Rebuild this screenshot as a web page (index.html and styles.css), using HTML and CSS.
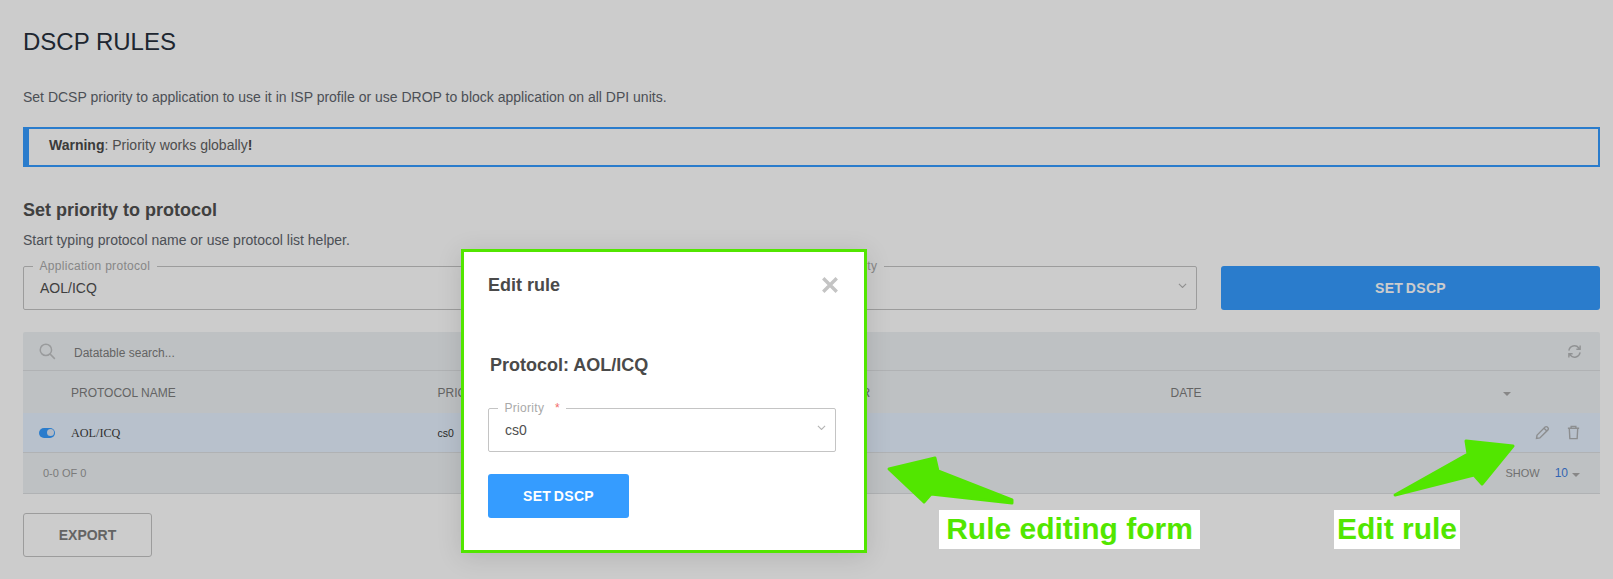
FILE: index.html
```html
<!DOCTYPE html>
<html lang="en">
<head>
<meta charset="utf-8">
<title>DSCP rules</title>
<link rel="stylesheet" href="styles.css">
</head>
<body>
<main class="page">
  <h1 class="page-title">DSCP RULES</h1>
  <p class="intro">Set DCSP priority to application to use it in ISP profile or use DROP to block application on all DPI units.</p>
  <div class="alert"><strong>Warning</strong>: Priority works globally<strong>!</strong></div>
  <h2 class="section-title">Set priority to protocol</h2>
  <p class="hint">Start typing protocol name or use protocol list helper.</p>
  <form class="rule-form">
    <fieldset class="field">
      <legend>Application protocol</legend>
      <span class="field-value">AOL/ICQ</span>
    </fieldset>
    <fieldset class="field">
      <legend>Priority</legend>
      <span class="field-value">cs0</span>
      <svg class="chevron" viewBox="0 0 10 6" aria-hidden="true"><path d="M1 1l4 4 4-4"/></svg>
    </fieldset>
    <button type="button" class="btn-primary">SET DSCP</button>
  </form>

  <section class="table">
    <div class="table-search">
      <svg class="icon-search" viewBox="0 0 18 18" aria-hidden="true"><circle cx="7.3" cy="7.3" r="6"/><path d="M11.8 11.8l5 5"/></svg>
      <span class="search-text">Datatable search...</span>
      <svg class="icon-refresh" viewBox="0 0 16 16" aria-hidden="true"><path d="M2 7a6 6 0 0 1 10.6-2.8L14 5.6M14 1.6v4h-4M14 9a6 6 0 0 1-10.6 2.8L2 10.4M2 14.4v-4h4"/></svg>
    </div>
    <div class="table-grid table-head">
      <span></span>
      <span>PROTOCOL NAME</span>
      <span>PRIORITY</span>
      <span>OPERATOR</span>
      <span>DATE</span>
      <span class="head-menu"><i class="caret"></i></span>
    </div>
    <div class="table-grid table-row">
      <span class="toggle"><i></i></span>
      <span class="cell-name">AOL/ICQ</span>
      <span class="cell-priority">cs0</span>
      <span></span>
      <span></span>
      <span class="row-actions">
        <svg class="icon-action" viewBox="0 0 16 16" aria-hidden="true"><path d="M2.2 10.8L10.8 2.2a1.6 1.6 0 0 1 2.3 0l.7.7a1.6 1.6 0 0 1 0 2.3L5.2 13.8 1.6 14.4zM9.6 3.4l3 3"/></svg>
        <svg class="icon-action" viewBox="0 0 16 16" aria-hidden="true"><path d="M2 3.5h12M5.5 3.5V1.5h5v2M3.5 3.5l.6 11h7.8l.6-11"/></svg>
      </span>
    </div>
    <div class="table-foot">
      <span class="range">0-0 OF 0</span>
      <span class="pager"><span>SHOW</span><b>10</b><i class="caret"></i></span>
    </div>
  </section>
  <button type="button" class="btn-export">EXPORT</button>
</main>

<div class="overlay"></div>

<div class="modal">
  <header class="modal-head">
    <h3>Edit rule</h3>
    <svg class="modal-close" viewBox="0 0 16 16" aria-hidden="true"><path d="M2 2l12 12M14 2L2 14"/></svg>
  </header>
  <p class="modal-protocol">Protocol: AOL/ICQ</p>
  <fieldset class="field modal-field">
    <legend>Priority <em>*</em></legend>
    <span class="field-value">cs0</span>
    <svg class="chevron" viewBox="0 0 10 6" aria-hidden="true"><path d="M1 1l4 4 4-4"/></svg>
  </fieldset>
  <button type="button" class="btn-modal">SET DSCP</button>
</div>

<svg class="arrows" viewBox="0 0 1613 579" aria-hidden="true">
  <path d="M889 469L935 458L938 471L1012 500L1012 503L931 494L924 502Z"/>
  <path d="M1395 495L1468 454L1466 441L1513 446L1482 484L1474 475Z"/>
</svg>
<div class="note note-form">Rule editing form</div>
<div class="note note-edit">Edit rule</div>
</body>
</html>
```
FILE: styles.css
```css
* { box-sizing: border-box; }
html, body { margin: 0; height: 579px; overflow: hidden; }
body { background: #fff; font-family: "Liberation Sans", Arial, sans-serif; color: #5e646c; position: relative; }

.page { padding: 28px 13px 0 23px; }
.page-title { margin: 0; font-size: 24px; line-height: 28px; font-weight: 400; color: #27303c; }
.intro { margin: 31px 0 0; font-size: 14px; line-height: 20px; }
.alert { margin-top: 20px; height: 40px; border: 2px solid #359cff; border-left-width: 6px; padding-left: 20px; font-size: 14px; line-height: 33px; color: #626262; }
.alert strong { color: #4a4a4a; }
.section-title { margin: 31px 0 0; font-size: 18px; line-height: 24px; font-weight: 700; color: #505050; }
.hint { margin: 8px 0 0; font-size: 14px; line-height: 20px; }

.rule-form { margin-top: 9px; display: grid; grid-template-columns: 1fr 376px 379px; column-gap: 24px; align-items: end; }
.field { position: relative; margin: 0; padding: 0; height: 51px; border: 1px solid #c4c4c4; border-radius: 2px; min-width: 0; }
.field legend { margin-left: 9px; padding: 0 6.5px; font-size: 12px; line-height: 14px; letter-spacing: .3px; color: #a9a9a9; }
.field-value { display: block; font-size: 14px; line-height: 20px; margin-top: 5px; padding-left: 16px; color: #4f4f4f; }
.chevron { position: absolute; right: 9px; top: 10px; width: 9px; height: 5.4px; fill: none; stroke: #b4b4b4; stroke-width: 1.2; }

.btn-primary, .btn-modal { border: 0; border-radius: 3px; background: #359cff; color: #fff; font: 700 14px "Liberation Sans", Arial, sans-serif; letter-spacing: .3px; word-spacing: -1.5px; }
.btn-primary { height: 44px; }

.table { margin-top: 22px; background: #eef2f4; border-radius: 2px; }
.table-search { height: 39px; display: flex; align-items: center; padding: 0 18px 0 16px; border-bottom: 1px solid #dcdfe2; }
.icon-search { width: 17px; height: 17px; fill: none; stroke: #c0c2c4; stroke-width: 1.6; }
.search-text { margin-left: 18px; padding-top: 3px; flex: 1; font-size: 12px; line-height: 16px; color: #7d7d7d; }
.icon-refresh { width: 15px; height: 15px; fill: none; stroke: #b5b7b9; stroke-width: 1.5; }

.table-grid { display: grid; grid-template-columns: 48px 366.5px 366.5px 366.5px 326.5px 1fr; align-items: center; }
.table-head { height: 42px; padding-top: 2px; font-size: 12px; color: #7d7d7d; }
.head-menu { padding-left: 6px; }
.caret { display: inline-block; width: 0; height: 0; border: 4px solid transparent; border-top: 4px solid #a9a9a9; border-bottom: 0; vertical-align: middle; }
.table-row { height: 40px; background: #e7f2ff; border-bottom: 1px solid #dcdfe2; }
.toggle { display: block; width: 16px; height: 10px; margin-left: 16px; border-radius: 5px; background: #359cff; position: relative; }
.toggle i { position: absolute; right: 1px; top: 1.5px; width: 7px; height: 7px; border-radius: 50%; background: #dfe8f5; }
.cell-name { padding-top: 1px; font-family: "Liberation Serif", serif; font-size: 12.2px; color: #3d3d3d; }
.cell-priority { font-size: 10.5px; color: #333; }
.row-actions { display: flex; justify-content: flex-end; gap: 16px; padding-right: 19px; }
.icon-action { width: 15px; height: 15px; fill: none; stroke: #b0b2b4; stroke-width: 1.5; }

.table-foot { height: 41px; display: flex; align-items: center; justify-content: space-between; padding: 0 20px 0 20px; border-bottom: 1px solid #dcdfe2; }
.range { font-size: 11px; color: #9a9a9a; }
.pager { display: flex; align-items: center; font-size: 11px; color: #8c8c8c; }
.pager b { margin: 0 4px 0 15px; font-size: 12px; font-weight: 400; color: #3f7ee0; }
.pager .caret { margin-top: 3px; }

.btn-export { display: block; margin-top: 19px; width: 129px; height: 44px; background: transparent; border: 1px solid #c4c4c4; border-radius: 3px; font: 700 14px "Liberation Sans", Arial, sans-serif; color: #7d7d7d; }

.overlay { position: absolute; inset: 0; background: rgba(0, 0, 0, .2); }

.modal { position: absolute; left: 461px; top: 249px; width: 406px; height: 304px; padding: 21px 28px 0 24px; background: #fff; border: 3px solid #52e600; box-shadow: 0 4px 24px rgba(0, 0, 0, .12); }
.modal-head { display: flex; align-items: center; justify-content: space-between; height: 24px; margin-right: -3px; }
.modal-head h3 { margin: 0; font-size: 18px; line-height: 24px; font-weight: 700; color: #4a4a4a; }
.modal-close { width: 18px; height: 18px; fill: none; stroke: #c4c4c4; stroke-width: 3; }
.modal-protocol { margin: 56px 0 0 2px; font-size: 18px; line-height: 24px; font-weight: 700; color: #4a4a4a; }
.modal-field { margin-top: 24px; }
.modal-field legend em { margin-left: 7px; color: #f26b6b; font-style: normal; }
.btn-modal { display: block; margin-top: 22px; width: 141px; height: 44px; }

.arrows { position: absolute; left: 0; top: 0; width: 1613px; height: 579px; pointer-events: none; }
.arrows path { fill: #52e600; stroke: #52e600; stroke-width: 3; stroke-linejoin: round; }

.note { position: absolute; top: 510px; height: 39px; background: #fff; color: #52e600; font-size: 30px; line-height: 37px; font-weight: 700; text-align: center; white-space: nowrap; }
.note-form { left: 939px; width: 261px; }
.note-edit { left: 1334px; width: 126px; }
```
